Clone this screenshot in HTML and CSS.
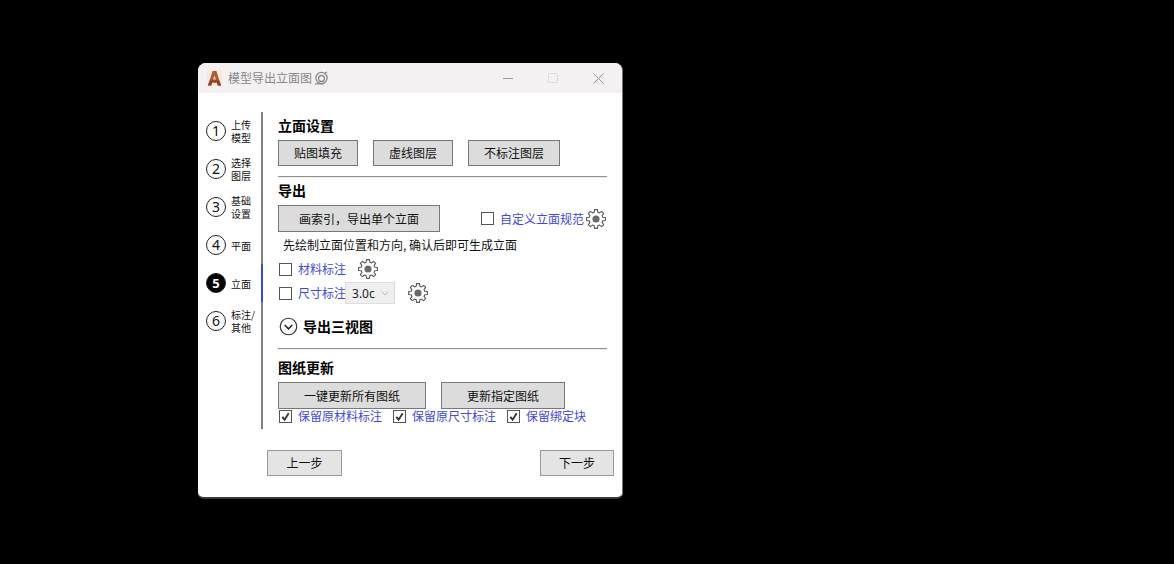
FILE: index.html
```html
<!DOCTYPE html>
<html lang="zh">
<head>
<meta charset="utf-8">
<title>模型导出立面图</title>
<link rel="stylesheet" href="styles.css">
</head>
<body>
<svg class="defs" width="0" height="0">
  <defs>
    <symbol id="gear" viewBox="0 0 20 20">
      <path d="M8.19 3.24 8.51.62h2.98l.32 2.62L13.5 3.94l2.08-1.63 2.11 2.11L16.06 6.5l.7 1.69 2.62.32v2.98l-2.62.32-.7 1.69 1.63 2.08-2.11 2.11-2.08-1.63-1.69.7-.32 2.62H8.51l-.32-2.62-1.69-.7-2.08 1.63-2.11-2.11L3.94 13.5l-.7-1.69-2.62-.32V8.51l2.62-.32.7-1.69-1.63-2.08 2.11-2.11L6.5 3.94z" fill="#fff" stroke="#555" stroke-width="1.100" stroke-linejoin="round"/>
      <circle cx="10" cy="10" r="3.600" fill="#6a6a6a"/>
    </symbol>
  </defs>
</svg>
<div class="window">
  <header class="titlebar">
    <svg class="logo" viewBox="0 0 16 16" preserveAspectRatio="none"><rect width="16" height="16" fill="#fbe9d9"/><path d="M1 15.500 6 1h4l5 14.500h-3.400l-1-3H5.400l-1 3z" fill="#b05a35"/><path d="M6.600 9.600h2.800L8 5.200z" fill="#f7dcc4"/><path d="M1 15.500 3 10.500h10l2 5h-3.400l-1-3H5.400l-1 3z" fill="#8f3f2a"/></svg>
    <span class="title">模型导出立面图</span>
    <svg class="title-mark" viewBox="0 0 14 14"><circle cx="7.500" cy="7" r="5.600" fill="none" stroke="#8a8a8a" stroke-width="1.300"/><circle cx="7.500" cy="7.500" r="3" fill="none" stroke="#8a8a8a" stroke-width="1.300"/><path d="M1 12.800h9M10.500 2.500 13 1" stroke="#8a8a8a" stroke-width="1.300" fill="none"/></svg>
    <div class="controls">
      <svg class="ctl" viewBox="0 0 11 11"><path d="M0 5.500h10" stroke="#999" stroke-width="1"/></svg>
      <svg class="ctl" viewBox="0 0 11 11"><rect x=".5" y=".5" width="9" height="9" rx="1" fill="none" stroke="#ddd"/></svg>
      <svg class="ctl" viewBox="0 0 11 11"><path d="M.5.500l10 10M10.500.500l-10 10" stroke="#999" stroke-width="1"/></svg>
    </div>
  </header>
  <div class="main">
    <nav class="steps">
      <div class="step"><span class="num">1</span><span class="label">上传<br>模型</span></div>
      <div class="step"><span class="num">2</span><span class="label">选择<br>图层</span></div>
      <div class="step"><span class="num">3</span><span class="label">基础<br>设置</span></div>
      <div class="step"><span class="num">4</span><span class="label">平面</span></div>
      <div class="step active"><span class="num">5</span><span class="label">立面</span></div>
      <div class="step"><span class="num">6</span><span class="label">标注/<br>其他</span></div>
    </nav>
    <section class="content">
      <h2 class="heading h-first">立面设置</h2>
      <div class="row row-buttons">
        <button class="btn w80">贴图填充</button>
        <button class="btn w80">虚线图层</button>
        <button class="btn w92">不标注图层</button>
      </div>
      <hr class="rule">
      <h2 class="heading">导出</h2>
      <div class="row row-export">
        <button class="btn w162 tall">画索引，导出单个立面</button>
        <label class="check custom"><span class="box"></span><span class="link">自定义立面规范</span></label>
        <svg class="gear gear-custom"><use href="#gear"/></svg>
      </div>
      <p class="hint">先绘制立面位置和方向, 确认后即可生成立面</p>
      <div class="row row-opt">
        <label class="check"><span class="box"></span><span class="link">材料标注</span></label>
        <svg class="gear gear-mat"><use href="#gear"/></svg>
      </div>
      <div class="row row-opt row-size">
        <label class="check"><span class="box"></span><span class="link">尺寸标注</span></label>
        <div class="select"><span>3.0c</span><svg class="chev" viewBox="0 0 8 5"><path d="M.5.500 4 4 7.500.500" fill="none" stroke="#bbb"/></svg></div>
        <svg class="gear gear-size"><use href="#gear"/></svg>
      </div>
      <div class="row row-expand">
        <svg class="expand" viewBox="0 0 20 20"><circle cx="10" cy="10" r="8.700" fill="none" stroke="#333" stroke-width="1.200"/><path d="M6 8.500 10 12.500 14 8.500" fill="none" stroke="#222" stroke-width="1.600"/></svg>
        <h2 class="heading expand-text">导出三视图</h2>
      </div>
      <hr class="rule rule-2">
      <h2 class="heading h-update">图纸更新</h2>
      <div class="row row-update">
        <button class="btn w148 tall">一键更新所有图纸</button>
        <button class="btn w124 tall">更新指定图纸</button>
      </div>
      <div class="row row-keep">
        <label class="check"><span class="box on"><svg viewBox="0 0 12 12"><path d="M2.500 6.500 5 9.500 9.500 2.500" fill="none" stroke="#333" stroke-width="2"/></svg></span><span class="link">保留原材料标注</span></label>
        <label class="check"><span class="box on"><svg viewBox="0 0 12 12"><path d="M2.500 6.500 5 9.500 9.500 2.500" fill="none" stroke="#333" stroke-width="2"/></svg></span><span class="link">保留原尺寸标注</span></label>
        <label class="check"><span class="box on"><svg viewBox="0 0 12 12"><path d="M2.500 6.500 5 9.500 9.500 2.500" fill="none" stroke="#333" stroke-width="2"/></svg></span><span class="link">保留绑定块</span></label>
      </div>
    </section>
  </div>
  <footer class="footer">
    <button class="btn nav w75">上一步</button>
    <button class="btn nav w74">下一步</button>
  </footer>
</div>
</body>
</html>
```
FILE: styles.css
```css
* { box-sizing: border-box; }
html, body { margin: 0; height: 100%; }
body {
  background: #000;
  padding: 63px 0 0 198px;
  font-family: "Noto Sans CJK SC", "Noto Sans", sans-serif;
  font-size: 12px;
  color: #111;
  overflow: hidden;
}
.defs { position: absolute; }
.window {
  width: 425px;
  height: 436px;
  background: #fff;
  border-radius: 8px 8px 6px 6px;
  border-bottom: 2px solid #3a3a3a;
  border-right: 1px solid #777;
  overflow: hidden;
}
.titlebar {
  height: 30px;
  background: #f5f0f2;
  display: flex;
  align-items: center;
  padding-left: 9px;
}
.logo { width: 15px; height: 16px; margin-right: 6px; }
.title { color: #8a8a8a; font-size: 12px; line-height: 16px; }
.title-mark { width: 14px; height: 14px; margin-left: 2px; }
.controls { margin-left: auto; display: flex; align-items: center; gap: 34px; padding-right: 18px; }
.ctl { width: 11px; height: 11px; display: block; }
.main { display: flex; margin-top: 19px; height: 317px; }
.steps { width: 65px; border-right: 2px solid #808080; flex: none; }
.step { height: 38px; display: flex; align-items: center; padding-left: 8px; gap: 5px; }
.step.active { width: 65px; border-right: 2px solid #3a46d8; }
.num {
  width: 20px; height: 20px; border-radius: 50%;
  border: 1.300px solid #222;
  display: flex; align-items: center; justify-content: center;
  font-family: "Noto Sans", sans-serif;
  font-size: 14px; line-height: 1; flex: none;
}
.active .num { background: #000; color: #fff; font-weight: 700; font-size: 13px; }
.label { font-size: 10px; line-height: 13px; }
.content { padding: 5px 15px 0; flex: 1; min-width: 0; }
.heading { margin: 3px 0 6px; font-size: 14px; line-height: 18px; font-weight: 700; color: #000; height: 18px; }
.h-first { margin: -1px 0 6px; }
.row { display: flex; align-items: center; }
.row-buttons { gap: 15px; }
.btn {
  height: 26px; padding: 0;
  background: #dcdcdc;
  border: 1px solid #777;
  border-radius: 0;
  font: inherit; font-size: 12px; line-height: 16px; color: #111;
}
.tall { height: 27px; }
.w80 { width: 80px; }
.w92 { width: 92px; }
.w162 { width: 162px; }
.w148 { width: 148px; }
.w124 { width: 124px; }
.w75 { width: 75px; }
.w74 { width: 74px; }
.rule { border: 0; border-top: 1px solid #909090; border-bottom: 1px solid #eee; height: 2px; margin: 10px 0 0; }
.check { display: flex; align-items: center; gap: 6px; }
.box { width: 13px; height: 13px; border: 1px solid #555; background: #fff; margin-left: 1px; flex: none; display: block; }
.box svg { display: block; width: 11px; height: 11px; }
.link { color: #3f48d8; line-height: 16px; white-space: nowrap; }
.custom { margin-left: 40px; }
.gear { width: 20px; height: 20px; flex: none; display: block; }
.gear-custom { margin-left: 2px; }
.hint { margin: 5px 0 0 5px; line-height: 16px; height: 16px; font-size: 12px; }
.row-opt { height: 22px; }
.hint + .row-opt { margin-top: 5px; }
.row-size { margin-top: 2px; }
.gear-mat { margin-left: 12px; }
.select {
  width: 50px; height: 22px;
  margin-left: -1px;
  background: #efefef; border: 1px solid #ddd;
  display: flex; align-items: center; justify-content: space-between;
  padding: 0 5px 0 6px; color: #222;
  font-family: "Noto Sans", sans-serif;
}
.chev { width: 8px; height: 5px; }
.gear-size { margin-left: 13px; }
.row-expand { margin-top: 12px; height: 20px; padding-left: 1px; gap: 5px; }
.expand { width: 19px; height: 19px; flex: none; }
.expand-text { margin: 0; }
.rule-2 { margin-top: 12px; }
.h-update { margin: 8px 0 6px; }
.row-update { gap: 15px; }
.row-keep { gap: 10px; height: 14px; }
.footer { display: flex; justify-content: space-between; padding: 21px 8px 0 69px; }
.nav { background: #e4e4e4; border-color: #999; }
```
